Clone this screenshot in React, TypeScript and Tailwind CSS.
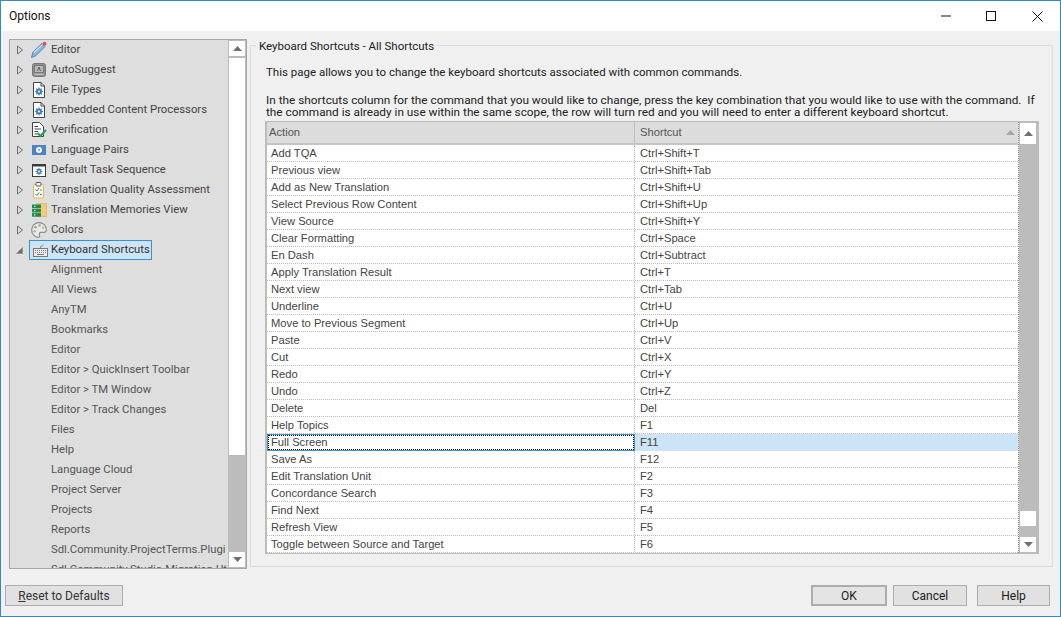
import React from "react";

const Expand = ({ open }: { open?: boolean }) => (
  <svg width="8" height="10" viewBox="0 0 8 10" className="shrink-0">
    {open ? (
      <path d="M6.5 2.5V8.5H0.5Z" fill="#6d6d6d" stroke="#8a8a8a" strokeWidth="0.6" />
    ) : (
      <path d="M1.5 1L6.5 5L1.5 9Z" fill="none" stroke="#6e6e6e" strokeWidth="1" />
    )}
  </svg>
);

const DocGear = () => (
  <svg width="14" height="16" viewBox="0 0 14 16">
    <path d="M1.5 .5H9L12.5 4V15.5H1.5Z" fill="#fff" stroke="#444" />
    <path d="M9 .5V4H12.5" fill="none" stroke="#444" />
    <circle cx="7" cy="9.5" r="3" fill="#3f7fc4" />
    <path d="M7 5.5V13.5M3 9.5H11M4.2 6.7L9.8 12.3M9.8 6.7L4.2 12.3" stroke="#3f7fc4" strokeWidth="1.2" />
    <circle cx="7" cy="9.5" r="1.1" fill="#fff" />
  </svg>
);

const icons: Record<string, React.ReactNode> = {
  Editor: (
    <svg width="18" height="18" viewBox="0 0 18 18">
      <path d="M3 11L12 2.5L15 5.5L6 14.5L1.5 16.5Z" fill="#8fb8e0" stroke="#4a86c5" strokeWidth="1" />
      <path d="M4 11.5L12.5 3.5" stroke="#fff" strokeWidth="1" />
      <circle cx="14.5" cy="2.8" r="2" fill="#d9535a" />
    </svg>
  ),
  AutoSuggest: (
    <svg width="14" height="14" viewBox="0 0 14 14">
      <rect x=".5" y=".5" width="13" height="13" rx="2" fill="#8f8f8f" stroke="#777" />
      <rect x="2.5" y="2.5" width="9" height="7" fill="#b9b9b9" stroke="#666" strokeWidth=".7" />
      <path d="M5.5 8L7 4L8.5 8" fill="none" stroke="#555" strokeWidth=".9" />
      <rect x="2.5" y="10.5" width="9" height="1.5" fill="#bdbdbd" />
    </svg>
  ),
  "File Types": <DocGear />,
  "Embedded Content Processors": <DocGear />,
  Verification: (
    <svg width="16" height="16" viewBox="0 0 16 16">
      <path d="M1.5 .5H8.5L12.5 4.5V14.5H1.5Z" fill="#fff" stroke="#444" />
      <path d="M3.5 4.5H7M3.5 7H10M3.5 9.5H7M3.5 12H6" stroke="#444" />
      <path d="M6.5 11L9.5 14L15 8" fill="none" stroke="#2e9e5b" strokeWidth="2.2" />
    </svg>
  ),
  "Language Pairs": (
    <svg width="14" height="10" viewBox="0 0 14 10">
      <rect width="14" height="10" fill="#4a83c6" />
      <circle cx="7" cy="5" r="3" fill="#fff" />
      <path d="M6 3.5L8 4.5L7 7Z" fill="#4a83c6" />
    </svg>
  ),
  "Default Task Sequence": (
    <svg width="14" height="13" viewBox="0 0 14 13">
      <rect x=".5" y=".5" width="13" height="12" fill="#fff" stroke="#3c3c3c" />
      <rect width="14" height="2.5" fill="#3c3c3c" />
      <circle cx="7" cy="7.5" r="2.4" fill="#3f7fc4" />
      <path d="M7 4V11M3.5 7.5H10.5M4.6 5.1L9.4 9.9M9.4 5.1L4.6 9.9" stroke="#3f7fc4" strokeWidth="1.1" />
      <circle cx="7" cy="7.5" r=".9" fill="#fff" />
    </svg>
  ),
  "Translation Quality Assessment": (
    <svg width="12" height="17" viewBox="0 0 12 17">
      <rect x=".5" y="2.5" width="10" height="13.5" rx="1" fill="#fdf7e4" stroke="#e3b755" />
      <rect x="3" y=".5" width="5" height="3.5" rx="1" fill="#fff" stroke="#555" />
      <path d="M2.5 7.5L4 9L6 6M7 8H9M2.5 12L4 13.5L6 10.5M7 12.5H9" fill="none" stroke="#3f7fc4" />
    </svg>
  ),
  "Translation Memories View": (
    <svg width="15" height="14" viewBox="0 0 15 14">
      <rect x="5" y=".5" width="9.5" height="13" fill="#f1cd7a" stroke="#e5b85a" />
      <rect x="0" y="1.5" width="9" height="3.6" fill="#1f8a4c" />
      <rect x="0" y="5.8" width="9" height="3.6" fill="#1f8a4c" />
      <rect x="0" y="10.1" width="9" height="3.6" fill="#1f8a4c" />
      <path d="M2 3.3H3.5M2 7.6H3.5M2 11.9H3.5" stroke="#fff" />
    </svg>
  ),
  Colors: (
    <svg width="16" height="16" viewBox="0 0 14 14">
      <path d="M7 .6C3.2.6.6 3.4.6 7s2.8 6.4 5.6 6.4c1.8 0 1.6-1.4 1.2-2.3-.5-1.2.2-2 1.4-2h2.4c1.5 0 2.2-1 2.2-2.4C13.4 3 10.6.6 7 .6Z" fill="#e9e9e9" stroke="#8a8a8a" />
      <circle cx="4" cy="4.5" r="1.1" fill="#c58a86" />
      <circle cx="7.5" cy="3" r="1.1" fill="#8fa9c9" />
      <circle cx="10.5" cy="5" r="1.1" fill="#c9b878" />
      <circle cx="3.2" cy="8" r="1.1" fill="#9fb89a" />
    </svg>
  ),
  "Keyboard Shortcuts": (
    <svg width="15" height="13" viewBox="0 0 15 13">
      <path d="M7.5 5V3C7.5 1.5 10 2.5 10.5 .5" fill="none" stroke="#888" />
      <rect x=".5" y="4.5" width="14" height="8" fill="#eee" stroke="#777" />
      <path d="M2 6.5H13M2 8.5H13" stroke="#777" strokeDasharray="1 1" />
      <path d="M4 10.5H11" stroke="#777" />
    </svg>
  ),
};

const parents = [
  "Editor",
  "AutoSuggest",
  "File Types",
  "Embedded Content Processors",
  "Verification",
  "Language Pairs",
  "Default Task Sequence",
  "Translation Quality Assessment",
  "Translation Memories View",
  "Colors",
];

const children = [
  "Alignment",
  "All Views",
  "AnyTM",
  "Bookmarks",
  "Editor",
  "Editor > QuickInsert Toolbar",
  "Editor > TM Window",
  "Editor > Track Changes",
  "Files",
  "Help",
  "Language Cloud",
  "Project Server",
  "Projects",
  "Reports",
  "Sdl.Community.ProjectTerms.Plugi",
  "Sdl.Community.Studio.Migration.Uti",
];

const rows: [string, string][] = [
  ["Add TQA", "Ctrl+Shift+T"],
  ["Previous view", "Ctrl+Shift+Tab"],
  ["Add as New Translation", "Ctrl+Shift+U"],
  ["Select Previous Row Content", "Ctrl+Shift+Up"],
  ["View Source", "Ctrl+Shift+Y"],
  ["Clear Formatting", "Ctrl+Space"],
  ["En Dash", "Ctrl+Subtract"],
  ["Apply Translation Result", "Ctrl+T"],
  ["Next view", "Ctrl+Tab"],
  ["Underline", "Ctrl+U"],
  ["Move to Previous Segment", "Ctrl+Up"],
  ["Paste", "Ctrl+V"],
  ["Cut", "Ctrl+X"],
  ["Redo", "Ctrl+Y"],
  ["Undo", "Ctrl+Z"],
  ["Delete", "Del"],
  ["Help Topics", "F1"],
  ["Full Screen", "F11"],
  ["Save As", "F12"],
  ["Edit Translation Unit", "F2"],
  ["Concordance Search", "F3"],
  ["Find Next", "F4"],
  ["Refresh View", "F5"],
  ["Toggle between Source and Target", "F6"],
];

const Arrow = ({ down, small }: { down?: boolean; small?: boolean }) => (
  <svg width="9" height="5" viewBox="0 0 9 5">
    <path d={down ? "M0 0H9L4.5 5Z" : "M0 5H9L4.5 0Z"} fill={small ? "#a6a6a6" : "#6f6f6f"} />
  </svg>
);

const ScrollBtn = ({ down, className }: { down?: boolean; className: string }) => (
  <div className={`flex items-center justify-center bg-white border border-[#bcbcbc] shrink-0 ${className}`}>
    <Arrow down={down} />
  </div>
);

const Btn = ({ children, className }: { children: React.ReactNode; className: string }) => (
  <button className={`h-[21px] flex items-center justify-center bg-[#e1e1e1] border border-[#adadad] text-[12px] text-[#1a1a1a] ${className}`}>
    {children}
  </button>
);

export default function App() {
  return (
    <div className="w-[1061px] h-[617px] flex flex-col bg-[#f0f0f0] border border-[#2f8cc0] overflow-hidden font-['Roboto',sans-serif] text-[12px] text-[#333]">
      <div className="h-[30px] shrink-0 bg-white flex items-center pl-2 text-[#111] text-[12px]">
        <span className="flex-1">Options</span>
        <div className="flex items-center h-full">
          <div className="w-[46px] flex justify-center">
            <svg width="10" height="10" viewBox="0 0 10 10"><path d="M0 5H10" stroke="#111" /></svg>
          </div>
          <div className="w-[46px] flex justify-center ml-[-1px]">
            <svg width="10" height="10" viewBox="0 0 10 10"><rect x=".5" y=".5" width="9" height="9" fill="none" stroke="#111" /></svg>
          </div>
          <div className="w-[46px] flex justify-center">
            <svg width="11" height="11" viewBox="0 0 11 11"><path d="M.5 .5L10.5 10.5M10.5 .5L.5 10.5" stroke="#111" /></svg>
          </div>
        </div>
      </div>

      <div className="flex items-start h-[539px] shrink-0 pt-[8px] pl-[8px]">
        <div className="w-[238px] h-[530px] shrink-0 flex border border-[#a6a6a6] bg-[#dedede] overflow-hidden text-[11.3px]">
          <div className="w-[218px] shrink-0 overflow-hidden">
            {parents.map((p) => (
              <div key={p} className="h-[20px] flex items-center pl-[6px]">
                <Expand />
                <div className="w-[18px] h-[18px] ml-[6px] mr-[3px] flex items-center justify-center shrink-0">{icons[p]}</div>
                <span className="whitespace-nowrap text-[#444]">{p}</span>
              </div>
            ))}
            <div className="h-[20px] flex items-center pl-[6px]">
              <Expand open />
              <div className="ml-[5px] h-[20px] w-[123px] flex items-center border border-[#3a92cc] bg-[#cce4f5] pl-[1px]">
                <div className="w-[18px] h-[18px] mr-[2px] flex items-center justify-center shrink-0">{icons["Keyboard Shortcuts"]}</div>
                <span className="whitespace-nowrap text-[#333]">Keyboard Shortcuts</span>
              </div>
            </div>
            {children.map((c) => (
              <div key={c} className="h-[20px] flex items-center pl-[41px] whitespace-nowrap overflow-hidden text-[#555]">
                {c}
              </div>
            ))}
          </div>
          <div className="w-[18px] shrink-0 flex flex-col bg-[#bcbcbc] h-full">
            <ScrollBtn className="h-[17px]" />
            <div className="h-[399px] bg-white border border-[#bcbcbc] shrink-0" />
            <div className="flex-1" />
            <ScrollBtn down className="h-[17px]" />
          </div>
        </div>

        <div className="ml-[3px] w-[803px] h-[522px] mt-[6px] shrink-0 border border-[#dcdcdc] relative flex flex-col">
          <div className="absolute left-[5px] top-[-8px] bg-[#f0f0f0] px-[3px] text-[#222] leading-[16px] text-[11.5px]">Keyboard Shortcuts - All Shortcuts</div>
          <div className="pl-[15px] pt-[20px] text-[#222] leading-[13px] whitespace-pre">
            <div className="h-[14px] text-[11.5px]">This page allows you to change the keyboard shortcuts associated with common commands.</div>
            <div className="h-[14px]" />
            <div className="h-[12px] text-[11.8px]">In the shortcuts column for the command that you would like to change, press the key combination that you would like to use with the command.  If</div>
            <div className="h-[13px] text-[11.8px]">the command is already in use within the same scope, the row will turn red and you will need to enter a different keyboard shortcut.</div>
          </div>
          <div className="ml-[14px] mt-[2px] w-[774px] h-[433px] flex border-x-2 border-t border-b border-[#bcbcbc] bg-white font-['Liberation_Sans',sans-serif] text-[11.2px]">
            <div className="flex-1 flex flex-col min-w-0 border-r border-dotted border-[#8a8a8a]">
              <div className="h-[23px] shrink-0 flex items-center bg-[#dcdcdc] border-b-2 border-[#c4c4c4] text-[#555]">
                <div className="w-[368px] pl-[2px] border-r border-[#bdbdbd] h-full flex items-center">Action</div>
                <div className="flex-1 pl-[5px] flex items-center justify-between pr-[3px]">
                  Shortcut
                  <Arrow small />
                </div>
              </div>
              {rows.map(([a, s]) => {
                const sel = a === "Full Screen";
                return (
                  <div key={a} className={`h-[17px] shrink-0 flex items-center text-[#444] ${sel ? "" : "border-b border-dotted border-[#bcbcbc]"}`}>
                    {sel ? (
                      <div className="w-[368px] h-full border border-[#3a92cc]">
                        <div className="h-full pl-[2px] flex items-center border border-dotted border-black">{a}</div>
                      </div>
                    ) : (
                      <div className="w-[368px] h-full pl-[4px] flex items-center border-r border-dotted border-[#bcbcbc]">{a}</div>
                    )}
                    <div className={`flex-1 h-full pl-[5px] flex items-center ${sel ? "bg-[#cce4f5]" : ""}`}>{s}</div>
                  </div>
                );
              })}
            </div>
            <div className="w-[18px] shrink-0 flex flex-col bg-[#bcbcbc]">
              <ScrollBtn className="h-[23px]" />
              <div className="h-[365px] shrink-0" />
              <div className="h-[17px] bg-white border border-[#bcbcbc] shrink-0" />
              <div className="flex-1" />
              <ScrollBtn down className="h-[17px]" />
            </div>
          </div>
        </div>
      </div>

      <div className="flex items-start pt-[15px] pl-[4px]">
        <Btn className="w-[118px] text-[#333]"><span><span className="underline">R</span>eset to Defaults</span></Btn>
        <Btn className="w-[76px] ml-[688px] border-[#2f8cc0] border-2 bg-[#e4e4e4]">OK</Btn>
        <Btn className="w-[74px] ml-[6px]">Cancel</Btn>
        <Btn className="w-[73px] ml-[10px]">Help</Btn>
      </div>
    </div>
  );
}
